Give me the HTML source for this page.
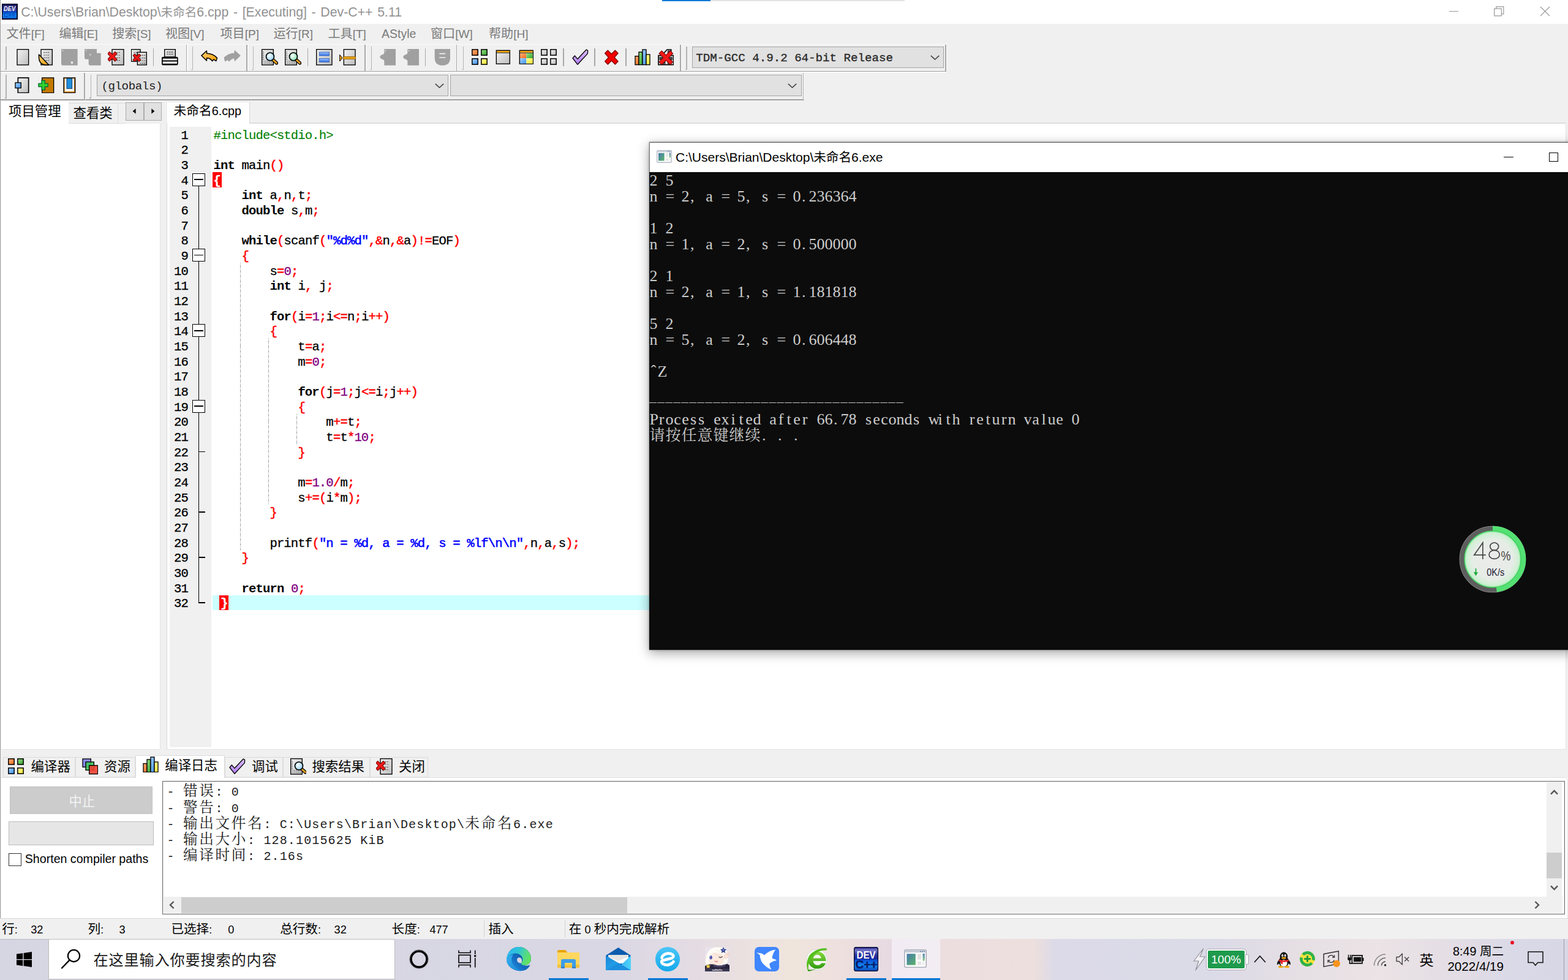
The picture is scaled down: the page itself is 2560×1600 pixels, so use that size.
<!DOCTYPE html><html><head><meta charset="utf-8"><title>Dev-C++</title><style>
*{margin:0;padding:0;box-sizing:border-box}
html,body{width:2560px;height:1600px;overflow:hidden;background:#f0f0f0}
body{position:relative;font-family:"Liberation Sans","Noto Sans CJK SC",sans-serif}
.b{position:absolute;display:block}
.t{position:absolute;white-space:pre;line-height:1}
.cj{font-family:"Liberation Sans","Noto Sans CJK SC",sans-serif;line-height:0}
.cs{font-family:"Liberation Serif","Noto Serif CJK SC",serif;line-height:0}
</style></head><body><svg width="0" height="0" style="position:absolute"><defs><linearGradient id="gp" x1="0" y1="0" x2="1" y2="1"><stop offset="0" stop-color="#f2f2f2"/><stop offset="1" stop-color="#bdbdbd"/></linearGradient>
<linearGradient id="go" x1="0" y1="0" x2="1" y2="1"><stop offset="0" stop-color="#ffd27a"/><stop offset="1" stop-color="#f59a00"/></linearGradient>
<radialGradient id="gl" cx=".4" cy=".4" r=".7"><stop offset="0" stop-color="#ffffff"/><stop offset="1" stop-color="#7ec8ee"/></radialGradient>
<radialGradient id="gl2" cx=".4" cy=".4" r=".7"><stop offset="0" stop-color="#ffffff"/><stop offset="1" stop-color="#6ddca6"/></radialGradient>
<linearGradient id="gb" x1="0" y1="0" x2="0" y2="1"><stop offset="0" stop-color="#9cc4ff"/><stop offset="1" stop-color="#2f6fe0"/></linearGradient>
<linearGradient id="sq1" x1="0" y1="0" x2="1" y2="1"><stop offset="0" stop-color="#ffb27a"/><stop offset="1" stop-color="#f26a1b"/></linearGradient>
<linearGradient id="sq2" x1="0" y1="0" x2="1" y2="1"><stop offset="0" stop-color="#9be08a"/><stop offset="1" stop-color="#2fa32a"/></linearGradient>
<linearGradient id="sq3" x1="0" y1="0" x2="1" y2="1"><stop offset="0" stop-color="#a8d4ff"/><stop offset="1" stop-color="#3a8eee"/></linearGradient>
<linearGradient id="sq4" x1="0" y1="0" x2="1" y2="1"><stop offset="0" stop-color="#ffffa0"/><stop offset="1" stop-color="#f2e52a"/></linearGradient>
<linearGradient id="sq0" x1="0" y1="0" x2="1" y2="1"><stop offset="0" stop-color="#fafafa"/><stop offset="1" stop-color="#b5b5b5"/></linearGradient>
<linearGradient id="gv" x1="0" y1="0" x2="0" y2="1"><stop offset="0" stop-color="#dcc0ff"/><stop offset="1" stop-color="#b07cf5"/></linearGradient>
</defs></svg><div class="b" style="left:0.00px;top:0.00px;width:2560.00px;height:39.00px;background:#fff;"></div><div class="b" style="left:1081.00px;top:0.00px;width:79.00px;height:2.40px;background:#0a79d8;"></div><div class="b" style="left:1160.00px;top:0.00px;width:317.00px;height:2.40px;background:#e4e4e4;"></div><svg class="b" style="left:3.00px;top:6.00px;" width="26" height="26" viewBox="0 0 26 26"><defs><linearGradient id="dvg" x1="0" y1="0" x2="0" y2="1"><stop offset="0" stop-color="#15155e"/><stop offset=".42" stop-color="#3a42a4"/><stop offset=".5" stop-color="#0a3fb8"/><stop offset=".78" stop-color="#0f84f2"/><stop offset="1" stop-color="#0a5ccc"/></linearGradient></defs><rect width="26" height="26" fill="#000018"/><rect x="1.2" y="1.2" width="23" height="23" fill="url(#dvg)"/><text x="12.6" y="11.6" font-family="Liberation Sans" font-weight="bold" font-style="italic" font-size="10" fill="#f4f4fa" text-anchor="middle" textLength="19" lengthAdjust="spacingAndGlyphs">DEV</text><text x="12.6" y="21.8" font-family="Liberation Sans" font-weight="bold" font-size="10.5" fill="#0a50c4" text-anchor="middle" textLength="19" lengthAdjust="spacingAndGlyphs">C++</text></svg><div class="t" style="left:34.20px;top:9.67px;font-size:21.3px;color:#929292;word-spacing:1.7px">C:\Users\Brian\Desktop\<span class="cj" style="font-size:19.55px">未命名</span>6.cpp - [Executing] - Dev-C++ 5.11</div><div class="b" style="left:2366.00px;top:18.00px;width:15.00px;height:1.30px;background:#9a9a9a;"></div><svg class="b" style="left:2439.00px;top:10.00px;" width="17" height="17" viewBox="0 0 17 17"><path d="M.7 4.2h11.6v11.6h-11.6z M3.8 4.2v-3.3h12v12h-3.4" fill="none" stroke="#9a9a9a" stroke-width="1.2"/></svg><svg class="b" style="left:2514.00px;top:10.00px;" width="17" height="17" viewBox="0 0 17 17"><path d="M1 1L16 16M16 1L1 16" stroke="#9a9a9a" stroke-width="1.2"/></svg><div class="b" style="left:0.00px;top:39.00px;width:2560.00px;height:33.00px;background:#f0f0f0;"></div><div class="t" style="left:10.50px;top:46.12px;font-size:19.0px;color:#7a7a7a;"><span class="cj" style="font-size:20.1px">文件</span>[F]</div><div class="t" style="left:96.40px;top:46.12px;font-size:19.0px;color:#7a7a7a;"><span class="cj" style="font-size:20.1px">编辑</span>[E]</div><div class="t" style="left:183.20px;top:46.12px;font-size:19.0px;color:#7a7a7a;"><span class="cj" style="font-size:20.1px">搜索</span>[S]</div><div class="t" style="left:270.00px;top:46.12px;font-size:19.0px;color:#7a7a7a;"><span class="cj" style="font-size:20.1px">视图</span>[V]</div><div class="t" style="left:359.50px;top:46.12px;font-size:19.0px;color:#7a7a7a;"><span class="cj" style="font-size:20.1px">项目</span>[P]</div><div class="t" style="left:446.50px;top:46.12px;font-size:19.0px;color:#7a7a7a;"><span class="cj" style="font-size:20.1px">运行</span>[R]</div><div class="t" style="left:535.50px;top:46.12px;font-size:19.0px;color:#7a7a7a;"><span class="cj" style="font-size:20.1px">工具</span>[T]</div><div class="t" style="left:623.00px;top:45.69px;font-size:19.5px;color:#7a7a7a;">AStyle</div><div class="t" style="left:703.00px;top:46.12px;font-size:19.0px;color:#7a7a7a;"><span class="cj" style="font-size:20.1px">窗口</span>[W]</div><div class="t" style="left:798.00px;top:46.12px;font-size:19.0px;color:#7a7a7a;"><span class="cj" style="font-size:20.1px">帮助</span>[H]</div><div class="b" style="left:0.00px;top:72.00px;width:1545.00px;height:1.30px;background:#fafafa;"></div><div class="b" style="left:0.00px;top:115.80px;width:1545.00px;height:1.70px;background:#a0a0a0;"></div><div class="b" style="left:0.00px;top:117.40px;width:1545.00px;height:1.20px;background:#fbfbfb;"></div><div class="b" style="left:0.00px;top:162.40px;width:1313.00px;height:1.70px;background:#a0a0a0;"></div><div class="b" style="left:0.00px;top:164.00px;width:1313.00px;height:1.20px;background:#fbfbfb;"></div><div class="b" style="left:9.00px;top:75.50px;width:1.50px;height:38.50px;background:#b4b4b4;"></div><div class="b" style="left:7.50px;top:112.50px;width:2.00px;height:1.50px;background:#b4b4b4;"></div><div class="b" style="left:313.50px;top:75.50px;width:1.50px;height:38.50px;background:#b4b4b4;"></div><div class="b" style="left:312.00px;top:112.50px;width:2.00px;height:1.50px;background:#b4b4b4;"></div><div class="b" style="left:412.80px;top:75.50px;width:1.50px;height:38.50px;background:#b4b4b4;"></div><div class="b" style="left:411.30px;top:112.50px;width:2.00px;height:1.50px;background:#b4b4b4;"></div><div class="b" style="left:605.70px;top:75.50px;width:1.50px;height:38.50px;background:#b4b4b4;"></div><div class="b" style="left:604.20px;top:112.50px;width:2.00px;height:1.50px;background:#b4b4b4;"></div><div class="b" style="left:755.50px;top:75.50px;width:1.50px;height:38.50px;background:#b4b4b4;"></div><div class="b" style="left:754.00px;top:112.50px;width:2.00px;height:1.50px;background:#b4b4b4;"></div><div class="b" style="left:1120.00px;top:75.50px;width:1.50px;height:38.50px;background:#b4b4b4;"></div><div class="b" style="left:1118.50px;top:112.50px;width:2.00px;height:1.50px;background:#b4b4b4;"></div><div class="b" style="left:304.10px;top:73.00px;width:1.30px;height:43.00px;background:#a9a9a9;"></div><div class="b" style="left:305.40px;top:73.00px;width:1.20px;height:43.00px;background:#fbfbfb;"></div><div class="b" style="left:402.30px;top:73.00px;width:1.30px;height:43.00px;background:#a9a9a9;"></div><div class="b" style="left:403.60px;top:73.00px;width:1.20px;height:43.00px;background:#fbfbfb;"></div><div class="b" style="left:595.30px;top:73.00px;width:1.30px;height:43.00px;background:#a9a9a9;"></div><div class="b" style="left:596.60px;top:73.00px;width:1.20px;height:43.00px;background:#fbfbfb;"></div><div class="b" style="left:744.80px;top:73.00px;width:1.30px;height:43.00px;background:#a9a9a9;"></div><div class="b" style="left:746.10px;top:73.00px;width:1.20px;height:43.00px;background:#fbfbfb;"></div><div class="b" style="left:1110.30px;top:73.00px;width:1.30px;height:43.00px;background:#a9a9a9;"></div><div class="b" style="left:1111.60px;top:73.00px;width:1.20px;height:43.00px;background:#fbfbfb;"></div><div class="b" style="left:1543.30px;top:73.00px;width:1.30px;height:43.00px;background:#a9a9a9;"></div><div class="b" style="left:1544.60px;top:73.00px;width:1.20px;height:43.00px;background:#fbfbfb;"></div><svg class="b" style="left:24.00px;top:80.00px" width="26.67" height="26.67" viewBox="0 0 16 16"><rect x="2.4" y="0.4" width="11.2" height="15.2" fill="url(#gp)" stroke="#000" stroke-width=".8"/></svg><svg class="b" style="left:62.00px;top:80.00px" width="26.67" height="26.67" viewBox="0 0 16 16"><rect x="3" y="0.4" width="11" height="15.2" fill="url(#gp)" stroke="#000" stroke-width=".8"/><path d="M5.5 3.4h5.5" stroke="#555" stroke-width=".7" stroke-dasharray="1.2 .8"/><path d="M5.5 6.0h5.5" stroke="#555" stroke-width=".7" stroke-dasharray="1.2 .8"/><path d="M5.5 8.6h5.5" stroke="#555" stroke-width=".7" stroke-dasharray="1.2 .8"/><path d="M5.5 11.200000000000001h5.5" stroke="#555" stroke-width=".7" stroke-dasharray="1.2 .8"/><path d="M.9 5.4L10.6 15.6H7Q.9 14.6 .9 8.4Z" fill="url(#go)" stroke="#000" stroke-width=".9" stroke-linejoin="round"/></svg><svg class="b" style="left:100.00px;top:80.00px" width="26.67" height="26.67" viewBox="0 0 16 16"><path d="M0 0h16v16h-15l-1-1z" fill="#a0a0a0"/><rect x="1" y="1" width="1" height="1" fill="#e8e8e8"/><rect x="9.5" y="12.3" width="2" height="2" fill="#f0f0f0"/></svg><svg class="b" style="left:138.00px;top:80.00px" width="26.67" height="26.67" viewBox="0 0 16 16"><path d="M0 0h12v4h4v12h-11l-1-1v-5h-3l-1-1z" fill="#a0a0a0"/><rect x="1" y="1" width="1" height="1" fill="#e8e8e8"/><rect x="5" y="5" width="1.2" height="1.2" fill="#e8e8e8"/></svg><svg class="b" style="left:176.00px;top:80.00px" width="26.67" height="26.67" viewBox="0 0 16 16"><rect x="4.2" y="0.4" width="11.4" height="15.2" fill="url(#gp)" stroke="#000" stroke-width=".8"/><path d="M6.7 3.4h5.5" stroke="#555" stroke-width=".7" stroke-dasharray="1.2 .8"/><path d="M6.7 6.0h5.5" stroke="#555" stroke-width=".7" stroke-dasharray="1.2 .8"/><path d="M6.7 8.6h5.5" stroke="#555" stroke-width=".7" stroke-dasharray="1.2 .8"/><path d="M6.7 11.200000000000001h5.5" stroke="#555" stroke-width=".7" stroke-dasharray="1.2 .8"/><path d="M1.7000000000000002 4.6L7.1000000000000005 10.0M7.1000000000000005 4.6L1.7000000000000002 10.0" stroke="#6a0000" stroke-width="3.4" stroke-linecap="square"/><path d="M1.7000000000000002 4.6L7.1000000000000005 10.0M7.1000000000000005 4.6L1.7000000000000002 10.0" stroke="#f01818" stroke-width="2.3" stroke-linecap="square"/></svg><svg class="b" style="left:214.00px;top:80.00px" width="26.67" height="26.67" viewBox="0 0 16 16"><rect x="0.2" y="0.4" width="8.8" height="11.8" fill="url(#gp)" stroke="#000" stroke-width=".8"/><path d="M2.7 3.4h5.5" stroke="#555" stroke-width=".7" stroke-dasharray="1.2 .8"/><path d="M2.7 6.0h5.5" stroke="#555" stroke-width=".7" stroke-dasharray="1.2 .8"/><path d="M2.7 8.6h5.5" stroke="#555" stroke-width=".7" stroke-dasharray="1.2 .8"/><path d="M2.7 11.200000000000001h5.5" stroke="#555" stroke-width=".7" stroke-dasharray="1.2 .8"/><rect x="6.2" y="3.2" width="9" height="12.4" fill="url(#gp)" stroke="#000" stroke-width=".8"/><path d="M8.7 6.2h5.5" stroke="#555" stroke-width=".7" stroke-dasharray="1.2 .8"/><path d="M8.7 8.8h5.5" stroke="#555" stroke-width=".7" stroke-dasharray="1.2 .8"/><path d="M8.7 11.4h5.5" stroke="#555" stroke-width=".7" stroke-dasharray="1.2 .8"/><path d="M8.7 14.0h5.5" stroke="#555" stroke-width=".7" stroke-dasharray="1.2 .8"/><path d="M3.6 6.5L7.800000000000001 10.7M7.800000000000001 6.5L3.6 10.7" stroke="#6a0000" stroke-width="3.0" stroke-linecap="square"/><path d="M3.6 6.5L7.800000000000001 10.7M7.800000000000001 6.5L3.6 10.7" stroke="#f01818" stroke-width="1.9" stroke-linecap="square"/></svg><svg class="b" style="left:264.00px;top:80.00px" width="26.67" height="26.67" viewBox="0 0 16 16"><rect x="2.8" y=".4" width="10.6" height="7.4" fill="url(#gp)" stroke="#000" stroke-width=".8"/><path d="M5 3h6.4M5 5h6.4" stroke="#555" stroke-width=".8" stroke-dasharray="1.5 .7"/><rect x=".5" y="8.2" width="15" height="7.2" rx="1" fill="#fafafa" stroke="#000" stroke-width="1"/><path d="M.5 8.7H15.5" stroke="#000" stroke-width="1.4"/><path d="M.5 11.7H15.5" stroke="#000" stroke-width="1.2"/><path d="M1 14.9H15" stroke="#000" stroke-width="1.2"/></svg><svg class="b" style="left:328.00px;top:80.00px" width="26.67" height="26.67" viewBox="0 0 16 16"><path d="M.5 6.5L5.6 1.8L5.8 4.4C9.4 4.4 13.2 6 16 8.8L14.8 11.8L12.6 10.2L11.2 11.8C9.8 9.8 7.8 8.8 5.8 8.8L5.6 11.4Z" fill="url(#go)" stroke="#000" stroke-width=".9" stroke-linejoin="round"/></svg><svg class="b" style="left:366.00px;top:80.00px" width="26.67" height="26.67" viewBox="0 0 16 16"><path transform="translate(16 0) scale(-1 1)" d="M.5 6.5L5.6 1.8L5.8 4.4C9.4 4.4 13.2 6 16 8.8L14.8 11.8L12.6 10.2L11.2 11.8C9.8 9.8 7.8 8.8 5.8 8.8L5.6 11.4Z" fill="#a0a0a0" stroke="#a0a0a0" stroke-width=".9" stroke-linejoin="round"/></svg><svg class="b" style="left:427.00px;top:80.00px" width="26.67" height="26.67" viewBox="0 0 16 16"><rect x="0.4" y="0.4" width="11.2" height="15.2" fill="url(#gp)" stroke="#000" stroke-width=".8"/><path d="M1.8 2.4v9M2 12h8.4M2 13.8h8.4" stroke="#555" stroke-width=".7" stroke-dasharray="1 .8"/><path d="M11 10.4L14.8 13.8" stroke="#000" stroke-width="3.2" stroke-linecap="round"/><path d="M11.2 10.6L14.7 13.7" stroke="#e8a020" stroke-width="1.7" stroke-linecap="round"/><circle cx="8.4" cy="7.5" r="3.9" fill="url(#gl)" stroke="#000" stroke-width="1"/></svg><svg class="b" style="left:465.00px;top:80.00px" width="26.67" height="26.67" viewBox="0 0 16 16"><rect x="0.4" y="0.4" width="11.2" height="15.2" fill="url(#gp)" stroke="#000" stroke-width=".8"/><path d="M1.8 2.4v9M2 12h8.4M2 13.8h8.4" stroke="#555" stroke-width=".7" stroke-dasharray="1 .8"/><path d="M11 10.4L14.8 13.8" stroke="#000" stroke-width="3.2" stroke-linecap="round"/><path d="M11.2 10.6L14.7 13.7" stroke="#e8a020" stroke-width="1.7" stroke-linecap="round"/><circle cx="8.4" cy="7.5" r="3.9" fill="url(#gl2)" stroke="#000" stroke-width="1"/></svg><svg class="b" style="left:516.00px;top:80.00px" width="26.67" height="26.67" viewBox="0 0 16 16"><rect x=".4" y=".4" width="15.2" height="15.2" fill="url(#gp)" stroke="#000" stroke-width=".8"/><rect x="3.2" y="3" width="9.6" height="3.6" fill="url(#gb)" stroke="#3a5fb0" stroke-width=".5"/><rect x="3.2" y="9.2" width="9.6" height="3.6" fill="url(#gb)" stroke="#3a5fb0" stroke-width=".5"/></svg><svg class="b" style="left:554.00px;top:80.00px" width="26.67" height="26.67" viewBox="0 0 16 16"><rect x="4.4" y=".4" width="11.2" height="15.2" fill="url(#gp)" stroke="#000" stroke-width=".8"/><rect x="4" y="7.4" width="12" height="2.6" fill="#e8a010" stroke="#7a5200" stroke-width=".4"/><path d="M.4 5.6L3 8.8L.4 12Z" fill="#e8a010" stroke="#000" stroke-width=".6"/></svg><svg class="b" style="left:619.50px;top:80.00px" width="26.67" height="26.67" viewBox="0 0 16 16"><path d="M4.4 0H16v16H4.4V11.6L3.4 10.4Q.2 9.6 .2 7.8Q.2 6 3.4 5.2L4.4 4Z" fill="#a0a0a0"/><rect x="5.2" y="1.2" width="1" height="1" fill="#e8e8e8"/></svg><svg class="b" style="left:657.50px;top:80.00px" width="26.67" height="26.67" viewBox="0 0 16 16"><path d="M4.4 0H16v16H4.4V11.6L3.4 10.4Q.2 9.6 .2 7.8Q.2 6 3.4 5.2L4.4 4Z" fill="#a0a0a0"/><rect x="5.2" y="1.2" width="1" height="1" fill="#e8e8e8"/></svg><svg class="b" style="left:708.50px;top:80.00px" width="26.67" height="26.67" viewBox="0 0 16 16"><path d="M.4 0H15.6V9Q15.6 15 10 16H6Q.4 15 .4 9Z" fill="#a0a0a0"/><path d="M5 4.6h6M5 8.4h6" stroke="#f0f0f0" stroke-width="1"/></svg><svg class="b" style="left:769.60px;top:80.00px" width="26.67" height="26.67" viewBox="0 0 16 16"><rect x="0.5" y="0.5" width="5.6" height="5.6" fill="url(#sq1)" stroke="#000" stroke-width=".9"/><rect x="9.5" y="0.5" width="5.6" height="5.6" fill="url(#sq2)" stroke="#000" stroke-width=".9"/><rect x="0.5" y="9.5" width="5.6" height="5.6" fill="url(#sq3)" stroke="#000" stroke-width=".9"/><rect x="9.5" y="9.5" width="5.6" height="5.6" fill="url(#sq4)" stroke="#000" stroke-width=".9"/></svg><svg class="b" style="left:807.50px;top:80.00px" width="26.67" height="26.67" viewBox="0 0 16 16"><rect x="1.4" y="1.4" width="13.2" height="13.2" fill="url(#gp)" stroke="#000" stroke-width=".8"/><rect x="1.8" y="1.8" width="12.4" height="1.6" fill="#f0a000"/><path d="M1.4 3.8h13.2" stroke="#000" stroke-width=".5"/></svg><svg class="b" style="left:845.50px;top:80.00px" width="26.67" height="26.67" viewBox="0 0 16 16"><rect x="1.4" y="1.4" width="13.2" height="13.2" fill="#fff" stroke="#000" stroke-width=".8"/><rect x="1.8" y="4" width="6.2" height="5" fill="url(#sq1)"/><rect x="8" y="4" width="6.2" height="5" fill="url(#sq2)"/><rect x="1.8" y="9" width="6.2" height="5.2" fill="url(#sq3)"/><rect x="8" y="9" width="6.2" height="5.2" fill="url(#sq4)"/><rect x="1.8" y="1.8" width="12.4" height="1.6" fill="#f0a000"/><path d="M1.4 3.8h13.2" stroke="#000" stroke-width=".5"/></svg><svg class="b" style="left:883.00px;top:80.00px" width="26.67" height="26.67" viewBox="0 0 16 16"><rect x="0.5" y="0.5" width="5.6" height="5.6" fill="url(#sq0)" stroke="#000" stroke-width=".9"/><rect x="9.5" y="0.5" width="5.6" height="5.6" fill="url(#sq0)" stroke="#000" stroke-width=".9"/><rect x="0.5" y="9.5" width="5.6" height="5.6" fill="url(#sq0)" stroke="#000" stroke-width=".9"/><rect x="9.5" y="9.5" width="5.6" height="5.6" fill="url(#sq0)" stroke="#000" stroke-width=".9"/></svg><svg class="b" style="left:934.00px;top:80.00px" width="26.67" height="26.67" viewBox="0 0 16 16"><path d="M.6 9L2.6 6.6L5.4 9.8L14 .6L15.4 1.6L15.2 4.6L5.4 15.2Z" fill="url(#gv)" stroke="#000" stroke-width=".8" stroke-linejoin="round"/></svg><svg class="b" style="left:985.00px;top:80.00px" width="26.67" height="26.67" viewBox="0 0 16 16"><path d="M1.6 4.2L4.4 1.4L8 5L11.6 1.4L14.4 4.2L10.8 8.2L14.4 12.2L11.6 15L8 11.4L4.4 15L1.6 12.2L5.2 8.2Z" fill="#f40000" stroke="#800" stroke-width=".9" stroke-linejoin="round"/></svg><svg class="b" style="left:1036.00px;top:80.00px" width="26.67" height="26.67" viewBox="0 0 16 16"><rect x=".6" y="7" width="3.6" height="8.4" fill="url(#sq1)" stroke="#000" stroke-width=".8"/><rect x="4.2" y="3" width="3.6" height="12.4" fill="url(#sq2)" stroke="#000" stroke-width=".8"/><rect x="7.8" y=".6" width="3.6" height="14.8" fill="url(#sq3)" stroke="#000" stroke-width=".8"/><rect x="11.4" y="5.4" width="3.6" height="10" fill="url(#sq4)" stroke="#000" stroke-width=".8"/></svg><svg class="b" style="left:1073.60px;top:80.00px" width="26.67" height="26.67" viewBox="0 0 16 16"><path d="M.6 15.4V6.4L4 6.4L9 .6H13V6.4H15.4V15.4Z" fill="#fff" stroke="#000" stroke-width="1"/><path d="M1.4 7.6h3.4v3.4h-3.4zM11.2 7.6h3.4v3.4h-3.4zM4.6 11.8h3v3h-3zM9.4 11.8h3.6v3h-3.6zM9.4 1.4h3v3h-3z" fill="#444"/><path d="M3.8 4.3999999999999995L12.2 12.8M12.2 4.3999999999999995L3.8 12.8" stroke="#6a0000" stroke-width="4.300000000000001" stroke-linecap="square"/><path d="M3.8 4.3999999999999995L12.2 12.8M12.2 4.3999999999999995L3.8 12.8" stroke="#f01818" stroke-width="3.2" stroke-linecap="square"/></svg><div class="b" style="left:249.80px;top:78.50px;width:1.40px;height:29.50px;background:#a8a8a8;"></div><div class="b" style="left:501.70px;top:78.50px;width:1.40px;height:29.50px;background:#a8a8a8;"></div><div class="b" style="left:694.00px;top:78.50px;width:1.40px;height:29.50px;background:#a8a8a8;"></div><div class="b" style="left:919.40px;top:78.50px;width:1.40px;height:29.50px;background:#a8a8a8;"></div><div class="b" style="left:970.40px;top:78.50px;width:1.40px;height:29.50px;background:#a8a8a8;"></div><div class="b" style="left:1021.40px;top:78.50px;width:1.40px;height:29.50px;background:#a8a8a8;"></div><div class="b" style="left:1130.00px;top:75.60px;width:411.00px;height:35.40px;background:#e1e1e1;border:1.4px solid #a6a6a6;"></div><div class="t" style="left:1136.20px;top:85.51px;font-size:19.17px;color:#2a2a2a;font-family:'Liberation Mono',monospace;-webkit-text-stroke:.35px">TDM-GCC 4.9.2 64-bit Release</div><svg class="b" style="left:1519.00px;top:89.50px;" width="15" height="8" viewBox="0 0 15 8"><path d="M.8 .8L7.5 7L14.2 .8" fill="none" stroke="#444" stroke-width="1.6"/></svg><div class="b" style="left:9.00px;top:121.50px;width:1.50px;height:39.00px;background:#b4b4b4;"></div><div class="b" style="left:7.50px;top:159.00px;width:2.00px;height:1.50px;background:#b4b4b4;"></div><div class="b" style="left:147.80px;top:121.50px;width:1.50px;height:39.00px;background:#b4b4b4;"></div><div class="b" style="left:146.30px;top:159.00px;width:2.00px;height:1.50px;background:#b4b4b4;"></div><div class="b" style="left:137.30px;top:119.00px;width:1.30px;height:43.60px;background:#a9a9a9;"></div><div class="b" style="left:138.60px;top:119.00px;width:1.20px;height:43.60px;background:#fbfbfb;"></div><div class="b" style="left:1311.00px;top:119.00px;width:1.30px;height:43.60px;background:#a9a9a9;"></div><div class="b" style="left:1312.30px;top:119.00px;width:1.20px;height:43.60px;background:#fbfbfb;"></div><svg class="b" style="left:24.00px;top:125.70px" width="26.67" height="26.67" viewBox="0 0 16 16"><rect x="3.2" y=".6" width="10.4" height="14.8" fill="url(#gp)" stroke="#000" stroke-width="1"/><rect x=".6" y="5.4" width="5.6" height="5.2" fill="url(#sq3)" stroke="#000" stroke-width=".8"/></svg><svg class="b" style="left:62.00px;top:125.70px" width="26.67" height="26.67" viewBox="0 0 16 16"><rect x="4" y=".6" width="11.4" height="14.8" fill="#c47a00" stroke="#000" stroke-width=".8"/><path d="M.6 6.2H3.6V3.2H6.8V6.2H9.8V9.4H6.8V12.4H3.6V9.4H.6Z" fill="#30d030" stroke="#063" stroke-width=".8"/></svg><svg class="b" style="left:100.00px;top:125.70px" width="26.67" height="26.67" viewBox="0 0 16 16"><rect x="2.4" y=".6" width="11.2" height="14.8" fill="#c47a00" stroke="#000" stroke-width=".8"/><rect x="3.4" y="1.4" width="9.2" height="12.6" fill="#f4f4f4"/><rect x="5.4" y="1.2" width="5.2" height="10" fill="#1f8fdc" stroke="#024" stroke-width=".5"/></svg><div class="b" style="left:158.00px;top:122.00px;width:574.00px;height:34.60px;background:#e1e1e1;border:1.4px solid #a6a6a6;"></div><div class="b" style="left:734.60px;top:122.00px;width:574.00px;height:34.60px;background:#e1e1e1;border:1.4px solid #a6a6a6;"></div><div class="t" style="left:165.40px;top:131.91px;font-size:19.17px;color:#222;font-family:'Liberation Mono',monospace;letter-spacing:-0.42px;">(globals)</div><svg class="b" style="left:710.00px;top:136.00px;" width="15" height="8" viewBox="0 0 15 8"><path d="M.8 .8L7.5 7L14.2 .8" fill="none" stroke="#444" stroke-width="1.6"/></svg><svg class="b" style="left:1286.00px;top:136.00px;" width="15" height="8" viewBox="0 0 15 8"><path d="M.8 .8L7.5 7L14.2 .8" fill="none" stroke="#444" stroke-width="1.6"/></svg><style>.cl{position:absolute;left:348.40px;white-space:pre;letter-spacing:-0.860px;-webkit-text-stroke:.3px;font-family:'Liberation Mono',monospace;font-size:20.6000px;line-height:24.667px;height:24.667px;color:#000}.cl b{font-weight:bold;-webkit-text-stroke:0}.pp{color:#008000;-webkit-text-stroke:.1px}.st{color:#0000ff;-webkit-text-stroke:.55px}.nu{color:#800080}.sy{color:#ff0000;-webkit-text-stroke:.5px}.ln{position:absolute;left:269.5px;width:37.4px;text-align:right;white-space:pre;letter-spacing:-0.860px;-webkit-text-stroke:.3px;font-family:'Liberation Mono',monospace;font-size:20.6000px;line-height:24.667px;color:#000}</style><div class="b" style="left:2.00px;top:165.50px;width:110.00px;height:36.50px;background:#fff;"></div><div class="t" style="left:14.00px;top:172.38px;font-size:21.4px;color:#000;"><span class="cj" style="font-size:21.4px">项目管理</span></div><div class="b" style="left:112.00px;top:167.50px;width:80.50px;height:34.00px;background:#f0f0f0;border:1.2px solid #dcdcdc;border-left:none"></div><div class="t" style="left:119.50px;top:174.68px;font-size:21.4px;color:#000;"><span class="cj" style="font-size:21.4px">查看类</span></div><div class="b" style="left:192.50px;top:167.50px;width:12.00px;height:34.00px;background:#f0f0f0;border-top:1.2px solid #dcdcdc;border-bottom:1.2px solid #dcdcdc"></div><div class="b" style="left:205.40px;top:167.40px;width:29.40px;height:29.40px;background:#e1e1e1;border:1.3px solid #adadad"></div><div class="b" style="left:234.60px;top:167.40px;width:29.40px;height:29.40px;background:#e1e1e1;border:1.3px solid #adadad"></div><svg class="b" style="left:216.40px;top:177.40px;" width="6" height="9" viewBox="0 0 6 9"><path d="M5.6 .2V8.8L.6 4.5Z" fill="#000"/></svg><svg class="b" style="left:246.60px;top:177.40px;" width="6" height="9" viewBox="0 0 6 9"><path d="M.4 .2V8.8L5.4 4.5Z" fill="#000"/></svg><div class="b" style="left:2.00px;top:201.60px;width:260.00px;height:1022.60px;background:#fff;border-right:1.3px solid #e3e3e3;border-bottom:1.3px solid #e3e3e3"></div><div class="b" style="left:0.00px;top:0.00px;width:1.40px;height:1533.00px;background:#9b9b9b;"></div><div class="b" style="left:272.00px;top:200.40px;width:2285.00px;height:1.30px;background:#dedede;"></div><div class="b" style="left:272.60px;top:166.00px;width:135.40px;height:36.00px;background:#fff;border-right:1.2px solid #d8d8d8;border-top:1.2px solid #e9e9e9"></div><div class="t" style="left:283.60px;top:171.64px;font-size:19.8px;color:#000;"><span class="cj" style="font-size:20.7px">未命名</span>6.cpp</div><div class="b" style="left:272.00px;top:201.60px;width:2285.00px;height:1022.60px;background:#fff;border-left:1.3px solid #d9d9d9;border-right:1.3px solid #e3e3e3;border-bottom:1.3px solid #e3e3e3"></div><div class="b" style="left:277.40px;top:207.00px;width:67.40px;height:1013.40px;background:#f0f0f0;"></div><div class="b" style="left:346.70px;top:971.68px;width:2208.00px;height:24.67px;background:#ccffff;"></div><div class="b" style="left:323.60px;top:290.00px;width:1.70px;height:693.98px;background:#000;"></div><div class="b" style="left:323.60px;top:736.61px;width:11.70px;height:1.70px;background:#000;"></div><div class="b" style="left:323.60px;top:835.28px;width:11.70px;height:1.70px;background:#000;"></div><div class="b" style="left:323.60px;top:909.28px;width:11.70px;height:1.70px;background:#000;"></div><div class="b" style="left:323.60px;top:983.28px;width:11.70px;height:1.70px;background:#000;"></div><div class="b" style="left:313.90px;top:282.50px;width:21.20px;height:21.20px;background:#fff;border:1.6px solid #000;"></div><div class="b" style="left:317.30px;top:292.30px;width:14.40px;height:1.70px;background:#000;"></div><div class="b" style="left:313.90px;top:405.84px;width:21.20px;height:21.20px;background:#fff;border:1.6px solid #000;"></div><div class="b" style="left:317.30px;top:415.64px;width:14.40px;height:1.70px;background:#000;"></div><div class="b" style="left:313.90px;top:529.17px;width:21.20px;height:21.20px;background:#fff;border:1.6px solid #000;"></div><div class="b" style="left:317.30px;top:538.97px;width:14.40px;height:1.70px;background:#000;"></div><div class="b" style="left:313.90px;top:652.51px;width:21.20px;height:21.20px;background:#fff;border:1.6px solid #000;"></div><div class="b" style="left:317.30px;top:662.31px;width:14.40px;height:1.70px;background:#000;"></div><div class="b" style="left:391.70px;top:429.00px;width:1.50px;height:468.67px;background:repeating-linear-gradient(#7c7c7c 0 1.33px,transparent 1.33px 2.67px)"></div><div class="b" style="left:437.70px;top:552.34px;width:1.50px;height:271.34px;background:repeating-linear-gradient(#7c7c7c 0 1.33px,transparent 1.33px 2.67px)"></div><div class="b" style="left:483.70px;top:675.67px;width:1.50px;height:49.33px;background:repeating-linear-gradient(#7c7c7c 0 1.33px,transparent 1.33px 2.67px)"></div><div class="b" style="left:346.50px;top:281.00px;width:15.00px;height:24.67px;background:#ff0000;"></div><div class="b" style="left:357.60px;top:971.68px;width:15.00px;height:24.67px;background:#ff0000;"></div><div class="ln" style="top:209.60px">1</div><div class="cl" style="top:209.60px"><span class="pp">#include&lt;stdio.h&gt;</span></div><div class="ln" style="top:234.27px">2</div><div class="ln" style="top:258.93px">3</div><div class="cl" style="top:258.93px"><b>int</b> main<span class="sy">(</span><span class="sy">)</span></div><div class="ln" style="top:283.60px">4</div><div class="cl" style="top:283.60px"><span style="color:#fff;font-weight:bold">{</span></div><div class="ln" style="top:308.27px">5</div><div class="cl" style="top:308.27px">    <b>int</b> a<span class="sy">,</span>n<span class="sy">,</span>t<span class="sy">;</span></div><div class="ln" style="top:332.94px">6</div><div class="cl" style="top:332.94px">    <b>double</b> s<span class="sy">,</span>m<span class="sy">;</span></div><div class="ln" style="top:357.60px">7</div><div class="ln" style="top:382.27px">8</div><div class="cl" style="top:382.27px">    <b>while</b><span class="sy">(</span>scanf<span class="sy">(</span><span class="st">"%d%d"</span><span class="sy">,</span><span class="sy">&amp;</span>n<span class="sy">,</span><span class="sy">&amp;</span>a<span class="sy">)</span><span class="sy">!</span><span class="sy">=</span>EOF<span class="sy">)</span></div><div class="ln" style="top:406.94px">9</div><div class="cl" style="top:406.94px">    <span class="sy">{</span></div><div class="ln" style="top:431.60px">10</div><div class="cl" style="top:431.60px">        s<span class="sy">=</span><span class="nu">0</span><span class="sy">;</span></div><div class="ln" style="top:456.27px">11</div><div class="cl" style="top:456.27px">        <b>int</b> i<span class="sy">,</span> j<span class="sy">;</span></div><div class="ln" style="top:480.94px">12</div><div class="ln" style="top:505.60px">13</div><div class="cl" style="top:505.60px">        <b>for</b><span class="sy">(</span>i<span class="sy">=</span><span class="nu">1</span><span class="sy">;</span>i<span class="sy">&lt;</span><span class="sy">=</span>n<span class="sy">;</span>i<span class="sy">+</span><span class="sy">+</span><span class="sy">)</span></div><div class="ln" style="top:530.27px">14</div><div class="cl" style="top:530.27px">        <span class="sy">{</span></div><div class="ln" style="top:554.94px">15</div><div class="cl" style="top:554.94px">            t<span class="sy">=</span>a<span class="sy">;</span></div><div class="ln" style="top:579.61px">16</div><div class="cl" style="top:579.61px">            m<span class="sy">=</span><span class="nu">0</span><span class="sy">;</span></div><div class="ln" style="top:604.27px">17</div><div class="ln" style="top:628.94px">18</div><div class="cl" style="top:628.94px">            <b>for</b><span class="sy">(</span>j<span class="sy">=</span><span class="nu">1</span><span class="sy">;</span>j<span class="sy">&lt;</span><span class="sy">=</span>i<span class="sy">;</span>j<span class="sy">+</span><span class="sy">+</span><span class="sy">)</span></div><div class="ln" style="top:653.61px">19</div><div class="cl" style="top:653.61px">            <span class="sy">{</span></div><div class="ln" style="top:678.27px">20</div><div class="cl" style="top:678.27px">                m<span class="sy">+</span><span class="sy">=</span>t<span class="sy">;</span></div><div class="ln" style="top:702.94px">21</div><div class="cl" style="top:702.94px">                t<span class="sy">=</span>t<span class="sy">*</span><span class="nu">10</span><span class="sy">;</span></div><div class="ln" style="top:727.61px">22</div><div class="cl" style="top:727.61px">            <span class="sy">}</span></div><div class="ln" style="top:752.27px">23</div><div class="ln" style="top:776.94px">24</div><div class="cl" style="top:776.94px">            m<span class="sy">=</span><span class="nu">1.0</span><span class="sy">/</span>m<span class="sy">;</span></div><div class="ln" style="top:801.61px">25</div><div class="cl" style="top:801.61px">            s<span class="sy">+</span><span class="sy">=</span><span class="sy">(</span>i<span class="sy">*</span>m<span class="sy">)</span><span class="sy">;</span></div><div class="ln" style="top:826.28px">26</div><div class="cl" style="top:826.28px">        <span class="sy">}</span></div><div class="ln" style="top:850.94px">27</div><div class="ln" style="top:875.61px">28</div><div class="cl" style="top:875.61px">        printf<span class="sy">(</span><span class="st">"n = %d, a = %d, s = %lf\n\n"</span><span class="sy">,</span>n<span class="sy">,</span>a<span class="sy">,</span>s<span class="sy">)</span><span class="sy">;</span></div><div class="ln" style="top:900.28px">29</div><div class="cl" style="top:900.28px">    <span class="sy">}</span></div><div class="ln" style="top:924.94px">30</div><div class="ln" style="top:949.61px">31</div><div class="cl" style="top:949.61px">    <b>return</b> <span class="nu">0</span><span class="sy">;</span></div><div class="ln" style="top:974.28px">32</div><div class="cl" style="top:974.28px"> <span style="color:#fff;font-weight:bold">}</span></div><style>.cc{position:absolute;white-space:pre;font-family:'Liberation Serif','Noto Serif CJK SC',serif;font-size:26px;line-height:26px;height:26px;color:#cccccc}.cc i{display:inline-block;width:13px;text-align:center;font-style:normal}</style><div class="b" style="left:1059.50px;top:232.00px;width:1510.00px;height:829.00px;background:#0c0c0c;box-shadow:0 5px 18px rgba(0,0,0,.36),0 0 3px rgba(0,0,0,.4);"></div><div class="b" style="left:1059.50px;top:232.00px;width:1510.00px;height:49.00px;background:#fff;border-top:1.3px solid #5a5a5a;border-left:1px solid #777"></div><svg class="b" style="left:1072.00px;top:245.00px;" width="25" height="21" viewBox="0 0 25 21"><defs><linearGradient id="cig" x1="0" y1="0" x2="1" y2="1"><stop offset="0" stop-color="#4a78ac"/><stop offset=".45" stop-color="#4e9490"/><stop offset="1" stop-color="#5db468"/></linearGradient><linearGradient id="cig2" x1="0" y1="0" x2="0" y2="1"><stop offset="0" stop-color="#5a80b8"/><stop offset="1" stop-color="#8fd08a"/></linearGradient></defs><rect x=".7" y=".7" width="23.6" height="19.6" rx="1.8" fill="#fff" stroke="#b3bac6" stroke-width="1.4"/><path d="M1.4 2.4Q1.4 1.4 2.4 1.4H22.6Q23.6 1.4 23.6 2.4V3.4H1.4Z" fill="#c6ccd6"/><rect x="17.6" y="1.7" width="1.1" height="1.1" fill="#5878a8"/><rect x="19.7" y="1.7" width="1.1" height="1.1" fill="#5878a8"/><rect x="21.8" y="1.7" width="1.1" height="1.1" fill="#7a90b4"/><rect x="3" y="4.9" width="9.7" height="12.6" fill="url(#cig)"/><rect x="15" y="4.6" width="4" height="7" fill="#e8e8e8"/><rect x="15" y="13.4" width="4" height="4.2" fill="#e6e6e6"/><rect x="19.6" y="13.4" width="3.4" height="4.2" fill="#f0f0f0"/><rect x="20.6" y="4.6" width="2.4" height="8" fill="url(#cig2)"/></svg><div class="t" style="left:1103.00px;top:246.22px;font-size:21.0px;color:#000;">C:\Users\Brian\Desktop\<span class="cj" style="font-size:20.6px">未命名</span>6.exe</div><div class="b" style="left:2455.00px;top:255.60px;width:15.50px;height:1.40px;background:#000;"></div><div class="b" style="left:2529.00px;top:248.60px;width:15.40px;height:15.40px;border:1.4px solid #000"></div><div class="cc" style="left:1060.50px;top:281.50px"><i>2</i><i> </i><i>5</i></div><div class="cc" style="left:1060.50px;top:307.50px"><i>n</i><i> </i><i>=</i><i> </i><i>2</i><i style="text-align:left;text-indent:1.5px">,</i><i> </i><i>a</i><i> </i><i>=</i><i> </i><i>5</i><i style="text-align:left;text-indent:1.5px">,</i><i> </i><i>s</i><i> </i><i>=</i><i> </i><i>0</i><i style="text-align:left;text-indent:1.5px">.</i><i>2</i><i>3</i><i>6</i><i>3</i><i>6</i><i>4</i></div><div class="cc" style="left:1060.50px;top:359.50px"><i>1</i><i> </i><i>2</i></div><div class="cc" style="left:1060.50px;top:385.50px"><i>n</i><i> </i><i>=</i><i> </i><i>1</i><i style="text-align:left;text-indent:1.5px">,</i><i> </i><i>a</i><i> </i><i>=</i><i> </i><i>2</i><i style="text-align:left;text-indent:1.5px">,</i><i> </i><i>s</i><i> </i><i>=</i><i> </i><i>0</i><i style="text-align:left;text-indent:1.5px">.</i><i>5</i><i>0</i><i>0</i><i>0</i><i>0</i><i>0</i></div><div class="cc" style="left:1060.50px;top:437.50px"><i>2</i><i> </i><i>1</i></div><div class="cc" style="left:1060.50px;top:463.50px"><i>n</i><i> </i><i>=</i><i> </i><i>2</i><i style="text-align:left;text-indent:1.5px">,</i><i> </i><i>a</i><i> </i><i>=</i><i> </i><i>1</i><i style="text-align:left;text-indent:1.5px">,</i><i> </i><i>s</i><i> </i><i>=</i><i> </i><i>1</i><i style="text-align:left;text-indent:1.5px">.</i><i>1</i><i>8</i><i>1</i><i>8</i><i>1</i><i>8</i></div><div class="cc" style="left:1060.50px;top:515.50px"><i>5</i><i> </i><i>2</i></div><div class="cc" style="left:1060.50px;top:541.50px"><i>n</i><i> </i><i>=</i><i> </i><i>5</i><i style="text-align:left;text-indent:1.5px">,</i><i> </i><i>a</i><i> </i><i>=</i><i> </i><i>2</i><i style="text-align:left;text-indent:1.5px">,</i><i> </i><i>s</i><i> </i><i>=</i><i> </i><i>0</i><i style="text-align:left;text-indent:1.5px">.</i><i>6</i><i>0</i><i>6</i><i>4</i><i>4</i><i>8</i></div><div class="cc" style="left:1060.50px;top:593.50px"><i style="position:relative;top:-1px">ˆ</i><i>Z</i></div><div class="b" style="left:1060.00px;top:656.80px;width:416.00px;height:1.40px;background:repeating-linear-gradient(90deg,#c4c4c4 0 12.3px,transparent 12.3px 13px)"></div><div class="cc" style="left:1060.50px;top:671.50px"><i>P</i><i>r</i><i>o</i><i>c</i><i>e</i><i>s</i><i>s</i><i> </i><i>e</i><i>x</i><i>i</i><i>t</i><i>e</i><i>d</i><i> </i><i>a</i><i>f</i><i>t</i><i>e</i><i>r</i><i> </i><i>6</i><i>6</i><i style="text-align:left;text-indent:1.5px">.</i><i>7</i><i>8</i><i> </i><i>s</i><i>e</i><i>c</i><i>o</i><i>n</i><i>d</i><i>s</i><i> </i><i>w</i><i>i</i><i>t</i><i>h</i><i> </i><i>r</i><i>e</i><i>t</i><i>u</i><i>r</i><i>n</i><i> </i><i>v</i><i>a</i><i>l</i><i>u</i><i>e</i><i> </i><i>0</i></div><div class="cc" style="left:1060.50px;top:697.50px"><span class="cs" style="font-size:25px;letter-spacing:1px">请按任意键继续</span><i style="text-align:left;text-indent:1.5px">.</i><i> </i><i style="text-align:left;text-indent:1.5px">.</i><i> </i><i style="text-align:left;text-indent:1.5px">.</i></div><div class="b" style="left:2.00px;top:1269.00px;width:2556.00px;height:230.00px;background:#fff;border-top:1.2px solid #e1e1e1"></div><div class="b" style="left:5.40px;top:1236.30px;width:117.20px;height:33.00px;background:#f0f0f0;border:1.2px solid #dcdcdc;border-bottom:1.2px solid #e1e1e1"></div><svg class="b" style="left:13.40px;top:1238.00px" width="26.67" height="26.67" viewBox="0 0 16 16"><rect x="0.5" y="0.5" width="5.6" height="5.6" fill="url(#sq1)" stroke="#000" stroke-width=".9"/><rect x="9.5" y="0.5" width="5.6" height="5.6" fill="url(#sq2)" stroke="#000" stroke-width=".9"/><rect x="0.5" y="9.5" width="5.6" height="5.6" fill="url(#sq3)" stroke="#000" stroke-width=".9"/><rect x="9.5" y="9.5" width="5.6" height="5.6" fill="url(#sq4)" stroke="#000" stroke-width=".9"/></svg><div class="t" style="left:50.60px;top:1242.48px;font-size:21.4px;color:#000;"><span class="cj" style="font-size:21.4px">编译器</span></div><div class="b" style="left:122.60px;top:1236.30px;width:98.20px;height:33.00px;background:#f0f0f0;border:1.2px solid #dcdcdc;border-bottom:1.2px solid #e1e1e1"></div><svg class="b" style="left:133.50px;top:1238.00px" width="26.67" height="26.67" viewBox="0 0 16 16"><rect x=".6" y=".6" width="8" height="8" fill="#8a8cf0" stroke="#000" stroke-width=".8"/><rect x="3.6" y="3.6" width="8" height="8" fill="#3fc45a" fill-opacity=".9" stroke="#000" stroke-width=".8"/><rect x="7" y="7" width="8.4" height="8.4" fill="#f04030" fill-opacity=".9" stroke="#000" stroke-width=".8"/></svg><div class="t" style="left:170.00px;top:1242.48px;font-size:21.4px;color:#000;"><span class="cj" style="font-size:21.4px">资源</span></div><div class="b" style="left:366.60px;top:1236.30px;width:95.40px;height:33.00px;background:#f0f0f0;border:1.2px solid #dcdcdc;border-bottom:1.2px solid #e1e1e1"></div><svg class="b" style="left:374.00px;top:1238.00px" width="26.67" height="26.67" viewBox="0 0 16 16"><path d="M.6 9L2.6 6.6L5.4 9.8L14 .6L15.4 1.6L15.2 4.6L5.4 15.2Z" fill="url(#gv)" stroke="#000" stroke-width=".8" stroke-linejoin="round"/></svg><div class="t" style="left:411.00px;top:1242.48px;font-size:21.4px;color:#000;"><span class="cj" style="font-size:21.4px">调试</span></div><div class="b" style="left:462.00px;top:1236.30px;width:142.00px;height:33.00px;background:#f0f0f0;border:1.2px solid #dcdcdc;border-bottom:1.2px solid #e1e1e1"></div><svg class="b" style="left:473.50px;top:1238.00px" width="26.67" height="26.67" viewBox="0 0 16 16"><rect x="0.4" y="0.4" width="11.2" height="15.2" fill="url(#gp)" stroke="#000" stroke-width=".8"/><path d="M1.8 2.4v9M2 12h8.4M2 13.8h8.4" stroke="#555" stroke-width=".7" stroke-dasharray="1 .8"/><path d="M11 10.4L14.8 13.8" stroke="#000" stroke-width="3.2" stroke-linecap="round"/><path d="M11.2 10.6L14.7 13.7" stroke="#e8a020" stroke-width="1.7" stroke-linecap="round"/><circle cx="8.4" cy="7.5" r="3.9" fill="url(#gl)" stroke="#000" stroke-width="1"/></svg><div class="t" style="left:509.40px;top:1242.48px;font-size:21.4px;color:#000;"><span class="cj" style="font-size:21.4px">搜索结果</span></div><div class="b" style="left:604.00px;top:1236.30px;width:95.00px;height:33.00px;background:#f0f0f0;border:1.2px solid #dcdcdc;border-bottom:1.2px solid #e1e1e1"></div><svg class="b" style="left:614.00px;top:1238.00px" width="26.67" height="26.67" viewBox="0 0 16 16"><rect x="4.2" y="0.4" width="11.4" height="15.2" fill="url(#gp)" stroke="#000" stroke-width=".8"/><path d="M6.7 3.4h5.5" stroke="#555" stroke-width=".7" stroke-dasharray="1.2 .8"/><path d="M6.7 6.0h5.5" stroke="#555" stroke-width=".7" stroke-dasharray="1.2 .8"/><path d="M6.7 8.6h5.5" stroke="#555" stroke-width=".7" stroke-dasharray="1.2 .8"/><path d="M6.7 11.200000000000001h5.5" stroke="#555" stroke-width=".7" stroke-dasharray="1.2 .8"/><path d="M1.7000000000000002 4.6L7.1000000000000005 10.0M7.1000000000000005 4.6L1.7000000000000002 10.0" stroke="#6a0000" stroke-width="3.4" stroke-linecap="square"/><path d="M1.7000000000000002 4.6L7.1000000000000005 10.0M7.1000000000000005 4.6L1.7000000000000002 10.0" stroke="#f01818" stroke-width="2.3" stroke-linecap="square"/></svg><div class="t" style="left:651.00px;top:1242.48px;font-size:21.4px;color:#000;"><span class="cj" style="font-size:21.4px">关闭</span></div><div class="b" style="left:220.80px;top:1233.30px;width:146.00px;height:37.00px;background:#fff;border:1.2px solid #dcdcdc;border-bottom:none"></div><svg class="b" style="left:232.50px;top:1234.60px" width="26.67" height="26.67" viewBox="0 0 16 16"><rect x=".6" y="7" width="3.6" height="8.4" fill="url(#sq1)" stroke="#000" stroke-width=".8"/><rect x="4.2" y="3" width="3.6" height="12.4" fill="url(#sq2)" stroke="#000" stroke-width=".8"/><rect x="7.8" y=".6" width="3.6" height="14.8" fill="url(#sq3)" stroke="#000" stroke-width=".8"/><rect x="11.4" y="5.4" width="3.6" height="10" fill="url(#sq4)" stroke="#000" stroke-width=".8"/></svg><div class="t" style="left:269.30px;top:1240.08px;font-size:21.4px;color:#000;"><span class="cj" style="font-size:21.4px">编译日志</span></div><div class="b" style="left:15.80px;top:1283.60px;width:233.50px;height:45.00px;background:#cccccc;border:1.2px solid #c2c2c2"></div><div class="t" style="left:112.50px;top:1298.05px;font-size:21.2px;color:#f4f4f4;"><span class="cj" style="font-size:21.2px">中止</span></div><div class="b" style="left:14.30px;top:1341.00px;width:236.50px;height:38.70px;background:#e6e6e6;border:1.3px solid #bcbcbc"></div><div class="b" style="left:14.30px;top:1392.80px;width:20.80px;height:20.80px;background:#fff;border:1.4px solid #333"></div><div class="t" style="left:40.80px;top:1393.41px;font-size:19.6px;color:#000;">Shorten compiler paths</div><div class="b" style="left:264.60px;top:1275.00px;width:2290.00px;height:218.00px;background:#fff;border:1.5px solid #6d6d6d;box-shadow:inset 0 0 0 1px #e8e8e8"></div><div class="t" style="left:272.60px;top:1284.27px;font-size:20px;color:#1c1c1c;font-family:'Liberation Mono',monospace;"><span style="letter-spacing:1.15px">- </span><span class="cs" style="font-size:23.6px;letter-spacing:2.7px">错误</span><span style="letter-spacing:1.15px">: 0</span></div><div class="t" style="left:272.60px;top:1310.52px;font-size:20px;color:#1c1c1c;font-family:'Liberation Mono',monospace;"><span style="letter-spacing:1.15px">- </span><span class="cs" style="font-size:23.6px;letter-spacing:2.7px">警告</span><span style="letter-spacing:1.15px">: 0</span></div><div class="t" style="left:272.60px;top:1336.77px;font-size:20px;color:#1c1c1c;font-family:'Liberation Mono',monospace;"><span style="letter-spacing:1.15px">- </span><span class="cs" style="font-size:23.6px;letter-spacing:2.7px">输出文件名</span><span style="letter-spacing:1.15px">: C:\Users\Brian\Desktop\</span><span class="cs" style="font-size:23.6px;letter-spacing:2.7px">未命名</span><span style="letter-spacing:1.15px">6.exe</span></div><div class="t" style="left:272.60px;top:1363.02px;font-size:20px;color:#1c1c1c;font-family:'Liberation Mono',monospace;"><span style="letter-spacing:1.15px">- </span><span class="cs" style="font-size:23.6px;letter-spacing:2.7px">输出大小</span><span style="letter-spacing:1.15px">: 128.1015625 KiB</span></div><div class="t" style="left:272.60px;top:1389.27px;font-size:20px;color:#1c1c1c;font-family:'Liberation Mono',monospace;"><span style="letter-spacing:1.15px">- </span><span class="cs" style="font-size:23.6px;letter-spacing:2.7px">编译时间</span><span style="letter-spacing:1.15px">: 2.16s</span></div><div class="b" style="left:2525.00px;top:1277.00px;width:25.00px;height:187.00px;background:#f0f0f0;"></div><div class="b" style="left:2525.00px;top:1391.60px;width:25.00px;height:42.60px;background:#cdcdcd;"></div><svg class="b" style="left:2531.00px;top:1288.50px;" width="13" height="9" viewBox="0 0 13 9"><path d="M1 7.6L6.5 2L12 7.6" fill="none" stroke="#555" stroke-width="2.4"/></svg><svg class="b" style="left:2531.00px;top:1444.50px;" width="13" height="9" viewBox="0 0 13 9"><path d="M1 1.4L6.5 7L12 1.4" fill="none" stroke="#555" stroke-width="2.4"/></svg><div class="b" style="left:266.00px;top:1464.00px;width:2285.00px;height:27.50px;background:#f0f0f0;"></div><div class="b" style="left:295.50px;top:1464.50px;width:728.00px;height:26.50px;background:#cdcdcd;"></div><svg class="b" style="left:276.00px;top:1471.00px;" width="9" height="13" viewBox="0 0 9 13"><path d="M7.6 1L2 6.5L7.6 12" fill="none" stroke="#555" stroke-width="2.4"/></svg><svg class="b" style="left:2505.00px;top:1471.00px;" width="9" height="13" viewBox="0 0 9 13"><path d="M1.4 1L7 6.5L1.4 12" fill="none" stroke="#555" stroke-width="2.4"/></svg><div class="b" style="left:0.00px;top:1499.00px;width:2560.00px;height:34.00px;background:#f0f0f0;border-top:1.3px solid #d7d7d7"></div><div class="t" style="left:3.20px;top:1509.19px;font-size:18.2px;color:#000;"><span class="cj" style="font-size:20.6px">行</span>:</div><div class="t" style="left:50.20px;top:1509.19px;font-size:18.2px;color:#000;">32</div><div class="t" style="left:143.60px;top:1509.19px;font-size:18.2px;color:#000;"><span class="cj" style="font-size:20.6px">列</span>:</div><div class="t" style="left:194.40px;top:1509.19px;font-size:18.2px;color:#000;">3</div><div class="t" style="left:279.40px;top:1509.19px;font-size:18.2px;color:#000;"><span class="cj" style="font-size:20.6px">已选择</span>:</div><div class="t" style="left:372.30px;top:1509.19px;font-size:18.2px;color:#000;">0</div><div class="t" style="left:457.20px;top:1509.19px;font-size:18.2px;color:#000;"><span class="cj" style="font-size:20.6px">总行数</span>:</div><div class="t" style="left:545.60px;top:1509.19px;font-size:18.2px;color:#000;">32</div><div class="t" style="left:639.60px;top:1509.19px;font-size:18.2px;color:#000;"><span class="cj" style="font-size:20.6px">长度</span>:</div><div class="t" style="left:701.40px;top:1509.19px;font-size:18.2px;color:#000;">477</div><div class="t" style="left:797.50px;top:1509.19px;font-size:18.2px;color:#000;"><span class="cj" style="font-size:20.6px">插入</span></div><div class="t" style="left:928.80px;top:1509.19px;font-size:18.2px;color:#000;"><span class="cj" style="font-size:20.6px">在</span> 0 <span class="cj" style="font-size:20.6px">秒内完成解析</span></div><div class="b" style="left:789.60px;top:1503.00px;width:1.30px;height:27.00px;background:#d0d0d0;"></div><div class="b" style="left:921.60px;top:1503.00px;width:1.30px;height:27.00px;background:#d0d0d0;"></div><div class="b" style="left:0.00px;top:1533.00px;width:2560.00px;height:67.00px;background:linear-gradient(90deg,#d6d5e2 0px,#d9d7e4 1000px,#e5dce3 1140px,#f0e5dd 1290px,#eddfde 1380px,#e8dae2 1452px,#ecdedf 1540px,#ecdfdd 1690px,#dcdae8 1722px,#dbdae7 1980px,#e6dfe4 2120px,#ebe3e5 2250px,#e3dde5 2380px,#dad9e7 2470px,#d8d7e6 2560px)"></div><svg class="b" style="left:26.50px;top:1553.50px;" width="25" height="25" viewBox="0 0 25 25"><path d="M0 3.6L10.2 2.2V11.9H0ZM11.6 2L25 .1V11.9H11.6ZM0 13.2H10.2V22.9L0 21.5ZM11.6 13.2H25V25L11.6 23.1Z" fill="#000"/></svg><div class="b" style="left:0.00px;top:1533.00px;width:80.00px;height:1.40px;background:#b9b9c0;"></div><div class="b" style="left:79.40px;top:1533.20px;width:566.00px;height:65.60px;background:#fff;border:1.8px solid #bdbdbd"></div><svg class="b" style="left:99.00px;top:1549.00px;" width="34" height="34" viewBox="0 0 34 34"><circle cx="21.5" cy="11.5" r="9.6" fill="none" stroke="#000" stroke-width="2.2"/><path d="M14.6 18.4L2 31.5" stroke="#000" stroke-width="2.4" stroke-linecap="round"/></svg><div class="t" style="left:152.40px;top:1555.88px;font-size:24px;color:#1a1a1a;"><span class="cj" style="font-size:24.2px;letter-spacing:0.82px">在这里输入你要搜索的内容</span></div><svg class="b" style="left:667.00px;top:1549.00px;" width="34" height="34" viewBox="0 0 34 34"><circle cx="17" cy="17" r="13" fill="none" stroke="#000" stroke-width="3.6"/><circle cx="17" cy="17" r="15.4" fill="none" stroke="#555" stroke-width="1" opacity=".6"/></svg><svg class="b" style="left:748.00px;top:1551.00px;" width="31" height="29" viewBox="0 0 31 29"><path d="M1 .5V4.5H20V.5M1 28.5V24.5H20V28.5" fill="none" stroke="#000" stroke-width="1.5"/><rect x="1" y="8.3" width="19" height="12.4" fill="none" stroke="#000" stroke-width="1.6"/><path d="M27.7 .5V7M27.7 13V28.5" stroke="#000" stroke-width="1.6"/><rect x="26.2" y="8.3" width="3" height="3" fill="#000"/></svg><svg class="b" style="left:827.00px;top:1546.00px;" width="40" height="40" viewBox="0 0 40 40"><defs><linearGradient id="eg1" x1="0" y1="1" x2=".9" y2=".2"><stop offset="0" stop-color="#2aa6ec"/><stop offset=".45" stop-color="#1670c4"/><stop offset="1" stop-color="#0c4a9c"/></linearGradient>
<linearGradient id="eg2" x1="0" y1=".2" x2="1" y2=".5"><stop offset="0" stop-color="#2fb6f2"/><stop offset=".45" stop-color="#2ec4d6"/><stop offset=".8" stop-color="#56dc80"/><stop offset="1" stop-color="#62e060"/></linearGradient>
<linearGradient id="eg3" x1="0" y1="0" x2="1" y2="1"><stop offset="0" stop-color="#35b4f0"/><stop offset="1" stop-color="#1a7fd4"/></linearGradient></defs>
<path d="M20 0C31 0 40 8.5 40 19C40 26 35 30 29.5 30C32 31.2 36 30.6 38.6 29C37 34 32 38 27 38.8C16 40.6 5 35 1.5 27C-2.5 17 4 0 20 0Z" fill="url(#eg1)"/>
<path d="M.2 23C1 17 6 13 11.5 12C8.5 15 7.6 20 8.6 24C10.6 32 18 38 27 38.8C16 40.6 5 35 1.5 27C.5 25.5 .1 24 .2 23Z" fill="url(#eg3)"/>
<path d="M20 0C31 0 40 8.5 40 19C40 26 35 30 29.5 30C25.5 30 23 28.2 24 26.2C25 24.6 26.4 23 26.4 20.5C26.4 15 21 10.6 14.5 10.6C7 10.6 1.4 16 .2 23C-1 11 8 0 20 0Z" fill="url(#eg2)"/>
<path d="M24.4 19.6C23 17.2 20 16.6 18.2 18.2C16.2 20.2 17 23.8 19.6 25.6C21 26.6 23 26.8 24 26.2C25 24.6 25.6 22 24.4 19.6Z" fill="#d9d7e4"/></svg><svg class="b" style="left:910.00px;top:1551.00px;" width="36" height="30" viewBox="0 0 36 30"><path d="M0 2.5Q0 0 2.5 0H13L17 4.5H0Z" fill="#e8a400"/><rect x="0" y="4" width="36" height="25" rx="1.5" fill="#ffd75e"/>
<rect x="0" y="24" width="36" height="5" fill="#f2c23c"/><path d="M6 29V17.5Q6 15 8.5 15H27.5Q30 15 30 17.5V29H24V21H12V29Z" fill="#3d9de8"/><path d="M6 27.5h6v2.5h-6zM24 27.5h6v2.5h-6z" fill="#2b82cf"/></svg><svg class="b" style="left:988.60px;top:1546.50px;" width="41" height="38" viewBox="0 0 41 38"><defs><linearGradient id="mg1" x1="0" y1="0" x2="1" y2="1"><stop offset="0" stop-color="#1b86d9"/><stop offset="1" stop-color="#28b6f2"/></linearGradient>
<linearGradient id="mg2" x1="0" y1="0" x2="1" y2="0"><stop offset="0" stop-color="#2ea7ea"/><stop offset="1" stop-color="#4fd3fb"/></linearGradient></defs>
<path d="M20.5 0L41 13V37H0V13Z" fill="#0b5cad"/><path d="M4 12H37V26H4Z" fill="#fff"/><path d="M4 12H37V15L20.5 22L4 15Z" fill="#e4e4e4"/>
<path d="M0 13L41 37H0Z" fill="url(#mg1)"/><path d="M41 13V37H16Z" fill="url(#mg2)"/><path d="M0 37L20.5 25L41 37Z" fill="#1c8fe0"/></svg><svg class="b" style="left:1070.00px;top:1546.00px;" width="40" height="40" viewBox="0 0 40 40"><defs><linearGradient id="bg1" x1="0" y1="0" x2="0" y2="1"><stop offset="0" stop-color="#4cc6f8"/><stop offset="1" stop-color="#13a9ec"/></linearGradient></defs>
<circle cx="20" cy="20" r="20" fill="url(#bg1)"/>
<path d="M10.5 17.5C13 11 22 8.5 28 12.5C30.5 14.5 29.5 17.5 26 18.5L12 22C9.5 23 9.5 26 12 27.5C18 31 26 29.5 29.5 24" fill="none" stroke="#fff" stroke-width="4.6" stroke-linecap="round"/></svg><svg class="b" style="left:1151.00px;top:1546.00px;" width="40" height="40" viewBox="0 0 40 40"><rect width="40" height="40" fill="#efe6e6"/>
<path d="M0 0H40V40H0Z" fill="#e9e2ea"/>
<path d="M2 30C-1 18 3 5 14 1.5C22 -1 31 1 36 8C39 13 38 22 35 29L30 35H6Z" fill="#fdfbf5"/>
<path d="M6 20C6 13 11 9.5 18 9.5C26 9.5 31 13 31 20C31 26 26 31 18.5 31C11 31 6 26 6 20Z" fill="#fde9de"/>
<path d="M3 22C3 12 9 5 18 4C12 8 10 13 10.5 17C7 18 5 22 5.5 28Z" fill="#fdfbf5"/><path d="M18 4C24 4 31 8 33 16C30 12 25 10.5 21 11C19 8 18.5 6 18 4Z" fill="#faf6ee"/>
<path d="M13 9C16 12 20 14 26 14.5" stroke="#d9d2cc" stroke-width=".7" fill="none"/>
<ellipse cx="9.6" cy="17.2" rx="2.3" ry="3.1" fill="#5a5cc0"/><ellipse cx="9.9" cy="16.3" rx="1" ry="1.3" fill="#2a2a70"/><circle cx="9" cy="15.8" r=".7" fill="#fff"/>
<path d="M22.8 16.6q2.6 1.6 5.4-.6" stroke="#4a3a3a" stroke-width="1.2" fill="none" stroke-linecap="round"/>
<path d="M16 23.4q2.2 1.6 4.4-.2" stroke="#c8605a" stroke-width="1" fill="none" stroke-linecap="round"/><ellipse cx="19.6" cy="24.4" rx="1" ry=".7" fill="#e88"/>
<path d="M30 .2l1.5 3.4 3.6.4-2.7 2.5.8 3.6-3.2-1.9-3.2 1.9.8-3.6-2.7-2.5 3.6-.4z" fill="#31408f"/><circle cx="30" cy="5" r="1.1" fill="#9fb0ee"/>
<path d="M31 15L35 9.5L37 10.5L36 13L39.5 10L40 12L37 17L33 19.5Z" fill="#fde4d8" stroke="#d8b0a0" stroke-width=".5"/>
<path d="M0 31C6 27.5 12 27.5 18 29.5C24 31.5 30 30 36 27.5L40 30V40H0Z" fill="#29243e"/>
<path d="M14 29C20 31 26 31 32 28.5L34 31C27 34 20 34 13 31.5Z" fill="#4a4468"/>
<path d="M5.2 27.6l1.2 2.6 2.8.3-2.1 1.9.6 2.8-2.5-1.5-2.5 1.5.6-2.8-2.1-1.9 2.8-.3z" fill="#f2cf4a"/>
<rect x="0" y="35.6" width="40" height="4.4" fill="#3a3852"/><text x="20" y="39.3" font-family="Liberation Sans" font-weight="bold" font-size="4.4" fill="#fff" text-anchor="middle">miHoYo</text></svg><svg class="b" style="left:1232.00px;top:1546.00px;" width="40" height="40" viewBox="0 0 40 40"><rect width="40" height="40" rx="7" fill="#4086fe"/>
<path d="M2.6 9.2L11 10.4C13 10.8 14.6 12 16 13.4C20 9 27 5 34.2 4.4C30.6 9 28.9 14 28.6 18.8C31.2 19.4 34 20.4 36.2 22C31.6 22.8 27 24.6 24.2 27.4C24.6 31 25.8 34 27.4 37C22.6 35 19 32.6 16.6 30C13 27 10.6 24 10 20.6C9.2 18 8.8 16 8.8 14.2C8.6 12.6 6 10.6 2.6 9.2Z" fill="#fff"/></svg><svg class="b" style="left:1314.00px;top:1546.00px;" width="38" height="40" viewBox="0 0 38 40"><defs><linearGradient id="ig" x1="0" y1="0" x2="0" y2="1"><stop offset="0" stop-color="#86d83c"/><stop offset="1" stop-color="#2f9c10"/></linearGradient></defs>
<circle cx="19.5" cy="21" r="17" fill="#f4f6f3" stroke="#d9ddd8" stroke-width="1"/>
<path d="M19.6 7.4C28.6 7.4 34.6 13.6 34.6 23H13.6C14.2 27.4 16.8 29.8 20.8 29.8C23.6 29.8 25.8 28.6 27 26.4H34C32 32.4 26.8 35.6 20.4 35.6C11.8 35.6 5.6 29.6 5.6 21.4C5.6 13.2 11.4 7.4 19.6 7.4ZM13.8 18.6H26.8C26.4 15 23.8 12.8 20.2 12.8C16.8 12.8 14.4 15 13.8 18.6Z" fill="url(#ig)"/>
<path d="M35.6 2.6C26 .8 12 6 6 17C2.4 24 2.4 32 5 39.2C6.4 39.6 8 39.2 9 38.4C7.4 39 6 38 5.8 36C5.2 30 7.4 23 11.4 17.2C17 9.2 26 4.6 34.6 5.6C36 5 36.4 3.6 35.6 2.6Z" fill="#55bf1c"/>
<path d="M5 39.2C8 40.6 14 38 18.4 35.2C13 37.6 8.4 38.4 5.4 36.6Z" fill="#2f9c10"/></svg><svg class="b" style="left:1394.00px;top:1546.00px;" width="40" height="40" viewBox="0 0 40 40"><defs><linearGradient id="dg" x1="0" y1="0" x2="0" y2="1"><stop offset="0" stop-color="#2a2a8c"/><stop offset=".1" stop-color="#7878cc"/><stop offset=".3" stop-color="#3038a0"/><stop offset=".48" stop-color="#16269a"/><stop offset=".54" stop-color="#0a50d4"/><stop offset=".78" stop-color="#1286f6"/><stop offset="1" stop-color="#0a48b4"/></linearGradient></defs>
<rect width="40" height="40" rx="3.4" fill="#040a2c"/><rect x="1.3" y="1.3" width="37.4" height="37.4" rx="2.4" fill="url(#dg)"/>
<text x="20" y="18.6" font-family="Liberation Sans" font-weight="bold" font-size="16.5" fill="#fff" text-anchor="middle" textLength="31" lengthAdjust="spacingAndGlyphs">DEV</text>
<text x="20.4" y="35" font-family="Liberation Sans" font-weight="bold" font-size="19" fill="#071f6c" stroke="#071f6c" stroke-width=".6" text-anchor="middle" textLength="36" lengthAdjust="spacingAndGlyphs">C++</text></svg><div class="b" style="left:1456.00px;top:1533.00px;width:78.90px;height:67.00px;background:rgba(247,246,255,.62);"></div><svg class="b" style="left:1476.00px;top:1550.00px;" width="37" height="30" viewBox="0 0 37 30"><defs><linearGradient id="tig" x1="0" y1="0" x2="1" y2="1"><stop offset="0" stop-color="#4a78ac"/><stop offset=".45" stop-color="#4e9490"/><stop offset="1" stop-color="#5db468"/></linearGradient>
<linearGradient id="tig2" x1="0" y1="0" x2="0" y2="1"><stop offset="0" stop-color="#5a80b8"/><stop offset="1" stop-color="#8fd08a"/></linearGradient></defs>
<rect x=".8" y=".8" width="35.4" height="28.4" rx="2.4" fill="#fff" stroke="#a9afb9" stroke-width="1.6"/>
<path d="M1.6 3.4Q1.6 1.6 3.4 1.6H33.6Q35.4 1.6 35.4 3.4V5.2H1.6Z" fill="#c6ccd6"/>
<rect x="26.4" y="2.6" width="1.6" height="1.6" fill="#5878a8"/><rect x="29.4" y="2.6" width="1.6" height="1.6" fill="#5878a8"/><rect x="32.4" y="2.6" width="1.6" height="1.6" fill="#7a90b4"/>
<rect x="4.4" y="7.2" width="14.4" height="18.4" fill="url(#tig)"/>
<rect x="22" y="7" width="6" height="10" fill="#e8e8e8"/><path d="M22 9.5h6M22 12h6M22 14.5h6" stroke="#d4d4d4" stroke-width=".8"/><rect x="22" y="19.4" width="6" height="6.2" fill="#e6e6e6"/><rect x="29" y="19.4" width="5" height="6.2" fill="#f0f0f0"/>
<rect x="30.4" y="7" width="3.4" height="11.6" fill="url(#tig2)"/></svg><div class="b" style="left:896.00px;top:1597.00px;width:65.00px;height:3.00px;background:#0a78d4;"></div><div class="b" style="left:1058.00px;top:1597.00px;width:65.00px;height:3.00px;background:#0a78d4;"></div><div class="b" style="left:1382.00px;top:1597.00px;width:65.00px;height:3.00px;background:#0a78d4;"></div><div class="b" style="left:1456.00px;top:1597.00px;width:78.90px;height:3.00px;background:#0a78d4;"></div><svg class="b" style="left:1947.00px;top:1548.00px;" width="22" height="37" viewBox="0 0 22 37"><path d="M17.5 1L2 21H10L5 36L20.5 14H12Z" fill="#f3f1f6" stroke="#8c8c94" stroke-width="1.1" stroke-linejoin="round"/></svg><div class="b" style="left:1970.00px;top:1549.50px;width:64.00px;height:33.50px;background:#1e9a4c;border:2.2px solid #fff;border-radius:4px;box-shadow:0 0 0 .8px #9a9aa2"></div><div class="b" style="left:2033.50px;top:1558.50px;width:4.40px;height:15.00px;background:#fff;border-radius:0 2px 2px 0;box-shadow:0 0 0 .8px #9a9aa2"></div><div class="t" style="left:1977.50px;top:1556.92px;font-size:19px;color:#fff;">100%</div><svg class="b" style="left:2047.00px;top:1559.00px;" width="20" height="13" viewBox="0 0 20 13"><path d="M1 12L10 2L19 12" fill="none" stroke="#111" stroke-width="1.7"/></svg><svg class="b" style="left:2084.00px;top:1553.50px;" width="24" height="26" viewBox="0 0 24 26"><path d="M3.6 13.6Q.4 17.6 1.2 21.2Q3 21 4.6 18.6ZM20.4 13.6Q23.6 17.6 22.8 21.2Q21 21 19.4 18.6Z" fill="#111"/>
<ellipse cx="12" cy="16" rx="8.4" ry="8.8" fill="#111"/><ellipse cx="12" cy="7.6" rx="6.4" ry="7" fill="#111"/>
<ellipse cx="12" cy="18.6" rx="5.6" ry="5.6" fill="#fff"/><path d="M4 12.2Q12 15.6 20 12.2L19.6 15.4Q12 18.2 4.4 15.4Z" fill="#e8222a"/><path d="M7 15.6L10.4 16.4L10 20.4L7.4 19.6Z" fill="#e8222a"/>
<ellipse cx="9.8" cy="6.2" rx="1.5" ry="2.1" fill="#fff"/><ellipse cx="14.2" cy="6.2" rx="1.5" ry="2.1" fill="#fff"/><circle cx="10.2" cy="6.6" r=".6" fill="#111"/><circle cx="13.8" cy="6.6" r=".6" fill="#111"/>
<ellipse cx="12" cy="10" rx="3.8" ry="1.5" fill="#f6a800"/>
<ellipse cx="7" cy="24.4" rx="4" ry="1.6" fill="#f6a800"/><ellipse cx="17" cy="24.4" rx="4" ry="1.6" fill="#f6a800"/></svg><svg class="b" style="left:2122.00px;top:1553.00px;" width="25" height="25" viewBox="0 0 25 25"><circle cx="12.5" cy="12.5" r="12.3" fill="#f8e23c"/>
<g transform="rotate(28 12.5 12.5)" fill="none" stroke="#2fb24c" stroke-width="4.8"><path d="M2.84 9.91A10 10 0 0 1 22.16 9.91"/><path d="M22.16 15.09A10 10 0 0 1 2.84 15.09"/></g>
<path d="M12.5 7.2V17.8M7.2 12.5H17.8" stroke="#1f9e3a" stroke-width="3"/></svg><svg class="b" style="left:2160.00px;top:1552.00px;" width="29" height="28" viewBox="0 0 29 28"><path d="M1.2 5.6L25.4 1V21.6L1.2 26.2Z" fill="none" stroke="#333" stroke-width="1.5"/>
<path d="M8.5 11.5A5 5 0 0 1 17.8 10.4M18.2 15.5A5 5 0 0 1 8.8 16.4" fill="none" stroke="#333" stroke-width="1.3"/><path d="M18.6 7.6V11H15.2M8 19.4V16H11.4" fill="none" stroke="#333" stroke-width="1.3"/>
<circle cx="22.2" cy="21.2" r="5.8" fill="#f7941d"/></svg><svg class="b" style="left:2200.00px;top:1556.00px;" width="27" height="19" viewBox="0 0 27 19"><rect x="7.4" y="3.9" width="16.6" height="12.9" fill="none" stroke="#111" stroke-width="1.8"/><rect x="24.6" y="7.8" width="1.9" height="5.2" fill="#111"/>
<rect x="10" y="6.6" width="12.4" height="7.6" fill="#111"/><path d="M1.6 2.8V7.4M4.9 2.8V7.4" stroke="#111" stroke-width="1.5"/><path d="M.2 7.2H6.4V9.4Q6.4 12 3.3 12Q.2 12 .2 9.4Z" fill="#111"/><path d="M3.6 11.6V16.8H7.4" fill="none" stroke="#111" stroke-width="1.7"/></svg><svg class="b" style="left:2242.00px;top:1556.00px;" width="23" height="22" viewBox="0 0 23 22"><path d="M1.5 20.5A18.5 18.5 0 0 1 20 2" fill="none" stroke="#888" stroke-width="1.5"/><path d="M7.5 20.5A12.5 12.5 0 0 1 20 8" fill="none" stroke="#666" stroke-width="1.5"/><path d="M13.5 20.5A6.5 6.5 0 0 1 20 14" fill="none" stroke="#555" stroke-width="1.5"/><circle cx="19.6" cy="19.8" r="1.7" fill="#222"/></svg><svg class="b" style="left:2279.00px;top:1556.00px;" width="23" height="20" viewBox="0 0 23 20"><path d="M1 6.5H5L10.4 1V19L5 13.5H1Z" fill="none" stroke="#444" stroke-width="1.4" stroke-linejoin="round"/><path d="M14.2 6.4L21.2 13.4M21.2 6.4L14.2 13.4" stroke="#444" stroke-width="1.4"/></svg><div class="t" style="left:2317.60px;top:1556.83px;font-size:23px;color:#000;"><span class="cj" style="font-size:23px">英</span></div><div class="t" style="left:2372.00px;top:1544.24px;font-size:19.8px;color:#000;">8:49 <span class="cj" style="font-size:19.6px">周二</span></div><div class="t" style="left:2363.40px;top:1568.16px;font-size:20.6px;color:#000;">2022/4/19</div><div class="b" style="left:2465.60px;top:1535.60px;width:6.00px;height:6.00px;background:#e81123;border-radius:50%"></div><svg class="b" style="left:2494.00px;top:1553.00px;" width="26" height="26" viewBox="0 0 26 26"><path d="M1 1H25V18.6H16.6L12.8 23L9 18.6H1Z" fill="none" stroke="#111" stroke-width="1.5"/></svg><div class="b" style="left:2552.60px;top:1533.00px;width:1.20px;height:67.00px;background:#9d9ca8;"></div><svg class="b" style="left:2376.50px;top:852.50px;" width="120" height="120" viewBox="0 0 120 120"><defs><radialGradient id="wg" cx=".5" cy=".5" r=".5"><stop offset="0" stop-color="#ebebeb"/><stop offset=".72" stop-color="#e6ece6"/><stop offset=".93" stop-color="#cdf0d2"/><stop offset="1" stop-color="#8fe6a0"/></radialGradient></defs>
<circle cx="60" cy="60" r="53.6" fill="none" stroke="#9a9a9a" stroke-width="1.4"/>
<circle cx="60" cy="60" r="49.8" fill="none" stroke="#5e5e5e" stroke-width="7.6"/>
<path d="M60 10A50 50 0 0 1 66.27 109.61" fill="none" stroke="#54e072" stroke-width="8.4"/>
<circle cx="60" cy="60" r="46" fill="url(#wg)" stroke="#3ed060" stroke-width="1.3"/>
<g fill="none" stroke="#484848" stroke-width="1.7"><path d="M43.9 60V33L29.8 53.2H48.8"/><ellipse cx="62.7" cy="39.2" rx="7" ry="6.2"/><ellipse cx="62.7" cy="52.4" rx="8.6" ry="7"/></g>
<text x="73.4" y="62" font-family="Liberation Sans" font-size="22" fill="#444" textLength="16" lengthAdjust="spacingAndGlyphs">%</text>
<path d="M32.5 75V85" stroke="#1fae3c" stroke-width="1.8"/><path d="M28.8 81.2H36.2L32.5 87.2Z" fill="#1fae3c"/>
<text x="50.2" y="86.6" font-family="Liberation Sans" font-size="15.6" fill="#1b1b33" textLength="29" lengthAdjust="spacingAndGlyphs">0K/s</text></svg></body></html>
